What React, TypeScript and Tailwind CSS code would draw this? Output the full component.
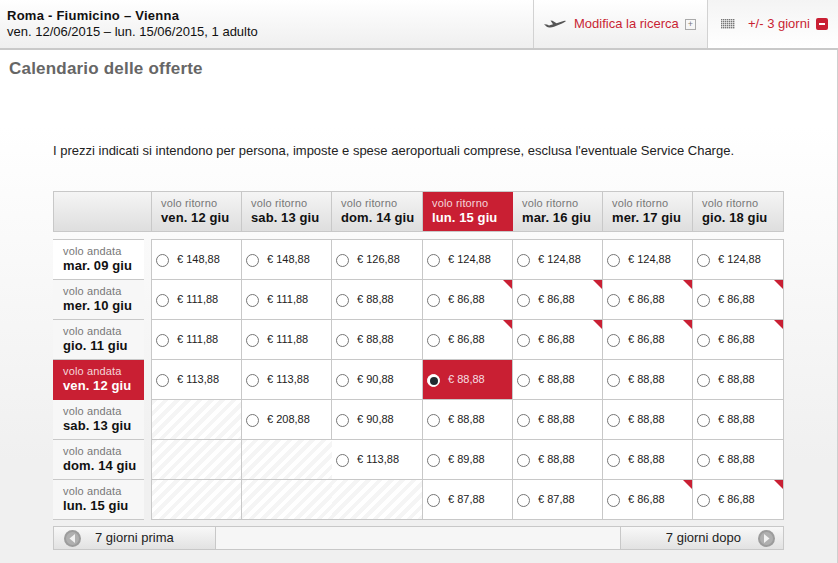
import React from 'react';

const returnDays = ['ven. 12 giu', 'sab. 13 giu', 'dom. 14 giu', 'lun. 15 giu', 'mar. 16 giu', 'mer. 17 giu', 'gio. 18 giu'];
const columnWidths = ['w-[90px]', 'w-[90px]', 'w-[91px]', 'w-[90px]', 'w-[90px]', 'w-[90px]', 'w-[91px]'];

// null = hatched (no flight), a trailing * marks the red corner
const rows: { day: string; prices: (string | null)[] }[] = [
  { day: 'mar. 09 giu', prices: ['148,88', '148,88', '126,88', '124,88', '124,88', '124,88', '124,88'] },
  { day: 'mer. 10 giu', prices: ['111,88', '111,88', '88,88', '86,88*', '86,88*', '86,88*', '86,88*'] },
  { day: 'gio. 11 giu', prices: ['111,88', '111,88', '88,88', '86,88*', '86,88*', '86,88*', '86,88*'] },
  { day: 'ven. 12 giu', prices: ['113,88', '113,88', '90,88', '88,88', '88,88', '88,88', '88,88'] },
  { day: 'sab. 13 giu', prices: [null, '208,88', '90,88', '88,88', '88,88', '88,88', '88,88'] },
  { day: 'dom. 14 giu', prices: [null, null, '113,88', '89,88', '88,88', '88,88', '88,88'] },
  { day: 'lun. 15 giu', prices: [null, null, null, '87,88', '87,88', '86,88*', '86,88*'] },
];

const PlaneIcon = () => (
  <svg width="22" height="12" viewBox="0 0 22 12" fill="#555">
    <path d="M0 6.3 L3 6.6 L5 7.4 L9 6.2 L6.5 2.4 L8.5 2.8 L12.5 5.2 L18 3.4 C19.5 2.9 21 2.6 21.8 3 C21.9 3.6 20 4.6 18 5.4 L10 8.8 C7 9.8 4 9.6 2.5 8.4 Z" />
  </svg>
);

const GridIcon = () => (
  <svg width="14" height="10" viewBox="0 0 14 10" fill="#777">
    {[0, 2, 4, 6, 8].map(y =>
      [0, 2, 4, 6, 8, 10, 12].map(x => <rect key={`${x}-${y}`} x={x} y={y} width="1.4" height="1.4" />)
    )}
  </svg>
);

const Arrow = ({ dir }: { dir: 'left' | 'right' }) => (
  <svg width="17" height="17" viewBox="0 0 17 17">
    <circle cx="8.5" cy="8.5" r="8.5" fill="#9c9c9c" />
    <circle cx="8.5" cy="8.5" r="6.5" fill="#b0b0b0" />
    <path d={dir === 'left' ? 'M11 4 L5.5 8.5 L11 13 Z' : 'M6 4 L11.5 8.5 L6 13 Z'} fill="#f2f2f2" />
  </svg>
);

const Radio = ({ checked }: { checked?: boolean }) => (
  <span
    className={`flex shrink-0 justify-center items-center mt-[2px] w-[13px] h-[13px] rounded-full border ${
      checked ? 'bg-white border-white' : 'bg-white border-[#767676]'
    }`}
  >
    {checked && <span className="w-[8px] h-[8px] rounded-full bg-[#1f2a30]" />}
  </span>
);

const PriceCell = ({ price, width, selected, open }: { price: string | null; width: string; selected: boolean; open: boolean }) => {
  if (price === null) {
    return (
      <div
        className={`${width} shrink-0 h-10 border-b border-[#c8c8c8] ${
          open ? 'border-r-0' : 'border-r'
        } bg-[repeating-linear-gradient(135deg,#f5f5f5_0,#f5f5f5_4px,#ffffff_4px,#ffffff_8px)]`}
      />
    );
  }
  const corner = price.endsWith('*');
  return (
    <div
      className={`${width} relative shrink-0 flex items-center pl-[4px] h-10 border-r border-b border-[#c8c8c8] ${
        selected ? 'bg-[#c91f33] text-[#f6dfe2]' : 'bg-white text-[#222]'
      }`}
    >
      <Radio checked={selected} />
      <span className="ml-2 text-[11px]">€ {price.replace('*', '')}</span>
      {corner && (
        <span className="absolute top-0 right-0 w-0 h-0 border-t-[9px] border-l-[9px] border-t-[#c91f33] border-l-transparent" />
      )}
    </div>
  );
};

export default function App() {
  return (
    <div className="w-[838px] h-[563px] overflow-hidden bg-[#f0f0f0] font-['Liberation_Sans',Arial,sans-serif] text-[#222]">
      {/* Top bar */}
      <header className="flex justify-between h-[50px] border-b-2 border-[#c9c9c9] bg-gradient-to-b from-white to-[#efefef]">
        <div className="pt-[8px] pl-[7px] text-[13px] leading-[16px] text-[#111]">
          <div className="font-bold text-[#111] tracking-[0.25px]">Roma - Fiumicino – Vienna</div>
          <div>ven. 12/06/2015 – lun. 15/06/2015, 1 adulto</div>
        </div>
        <div className="flex">
          <div className="flex items-center w-[174px] pl-[10px] border-l border-[#d2d2d2]">
            <PlaneIcon />
            <span className="ml-[8px] text-[13px] text-[#c91f33]">Modifica la ricerca</span>
            <span className="flex justify-center items-center ml-[6px] w-[11px] h-[11px] border border-[#aaa] text-[9px] leading-none text-[#777]">+</span>
          </div>
          <div className="flex items-center w-[131px] pl-[13px] border-l border-[#d2d2d2] bg-gradient-to-b from-[#f4f4f4] to-white">
            <GridIcon />
            <span className="ml-[13px] text-[13px] text-[#c91f33]">+/- 3 giorni</span>
            <span className="flex justify-center items-center ml-[6px] w-[12px] h-[12px] rounded-[2px] bg-[#c91f33]">
              <span className="w-[6px] h-[2px] bg-white" />
            </span>
          </div>
        </div>
      </header>

      {/* Content */}
      <main className="h-[513px] pl-[9px] border-r border-[#cfcfcf] bg-gradient-to-b from-white from-15% to-[#f0f0f0] to-80%">
        <h1 className="pt-[9px] text-[17px] leading-[20px] font-bold text-[#666] tracking-[0.2px]">Calendario delle offerte</h1>

        <div className="pl-[44px]">
          <p className="mt-[64px] text-[13px] leading-[16px] text-[#222]">
            I prezzi indicati si intendono per persona, imposte e spese aeroportuali comprese, esclusa l'eventuale Service Charge.
          </p>

          {/* Return days */}
          <div className="flex mt-[32px] w-[731px] h-[41px] border border-[#c8c8c8] bg-gradient-to-b from-[#f5f5f5] to-[#dedede]">
            <div className="w-[98px] shrink-0 border-r border-[#c8c8c8]" />
            {returnDays.map((day, i) => (
              <div
                key={day}
                className={`${i === 6 ? 'w-[90px]' : columnWidths[i]} shrink-0 pl-[9px] pt-[5px] border-r last:border-r-0 ${
                  i === 3 ? 'bg-[#c91f33] text-white border-[#c91f33]' : 'border-[#c8c8c8] text-[#111]'
                }`}
              >
                <div className={`text-[11px] leading-[12px] tracking-[0.15px] ${i === 3 ? 'text-[#f4d6da]' : 'text-[#777]'}`}>volo ritorno</div>
                <div className="text-[13px] leading-[18px] font-bold tracking-[0.1px]">{day}</div>
              </div>
            ))}
          </div>

          {/* Grid */}
          <div className="flex mt-[7px]">
            <div className="w-[91px] shrink-0 mr-[7px] border-t border-[#c8c8c8]">
              {rows.map((row, i) => (
                <div
                  key={row.day}
                  className={`h-10 pl-[10px] pt-[5px] ${
                    i === 3 ? 'bg-[#c91f33] text-white' : 'text-[#111] border-b border-[#c8c8c8]'
                  } ${i === 0 ? 'bg-white' : i === 3 ? '' : 'bg-[#f7f7f7]'}`}
                >
                  <div className={`text-[11px] leading-[12px] tracking-[0.15px] ${i === 3 ? 'text-[#f4d6da]' : 'text-[#777]'}`}>volo andata</div>
                  <div className="text-[13px] leading-[17px] font-bold tracking-[0.1px]">{row.day}</div>
                </div>
              ))}
            </div>
            <div className="border-t border-l border-[#c8c8c8]">
              {rows.map((row, r) => (
                <div key={row.day} className="flex">
                  {row.prices.map((price, c) => (
                    <PriceCell
                      key={c}
                      price={price}
                      width={columnWidths[c]}
                      selected={r === 3 && c === 3}
                      open={c === 1 && price === null}
                    />
                  ))}
                </div>
              ))}
            </div>
          </div>

          {/* Pager */}
          <div className="flex justify-between mt-[6px] w-[731px] h-[24px] border border-[#c8c8c8] bg-[#f6f6f6]">
            <div className="flex items-center w-[162px] pl-[10px] border-r border-[#c8c8c8] bg-gradient-to-b from-[#f8f8f8] to-[#e2e2e2]">
              <Arrow dir="left" />
              <span className="ml-[14px] text-[13px] text-[#222]">7 giorni prima</span>
            </div>
            <div className="flex justify-end items-center w-[163px] pr-[8px] border-l border-[#c8c8c8] bg-gradient-to-b from-[#f8f8f8] to-[#e2e2e2]">
              <span className="mr-[17px] text-[13px] text-[#222]">7 giorni dopo</span>
              <Arrow dir="right" />
            </div>
          </div>
        </div>
      </main>
    </div>
  );
}
